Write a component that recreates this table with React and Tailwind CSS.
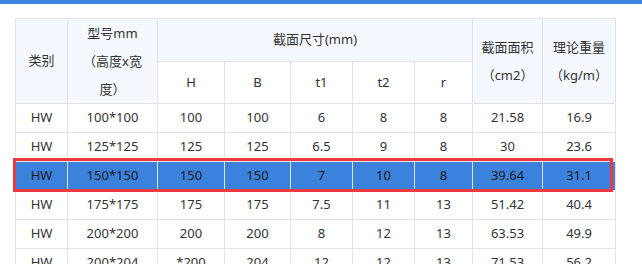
import React from 'react';

// 型钢规格表：HW 宽翼缘 H 型钢
const rows = [
  ['HW', '100*100', '100', '100', '6', '8', '8', '21.58', '16.9'],
  ['HW', '125*125', '125', '125', '6.5', '9', '8', '30', '23.6'],
  ['HW', '150*150', '150', '150', '7', '10', '8', '39.64', '31.1'],
  ['HW', '175*175', '175', '175', '7.5', '11', '13', '51.42', '40.4'],
  ['HW', '200*200', '200', '200', '8', '12', '13', '63.53', '49.9'],
  ['HW', '200*204', '*200', '204', '12', '12', '13', '71.53', '56.2'],
];

const colWidths = ['w-[52px]', 'w-[90px]', 'w-[67px]', 'w-[66px]', 'w-[62px]', 'w-[62px]', 'w-[58px]', 'w-[70px]', 'w-[73px]'];

const ACTIVE = 2;

export default function App() {
  return (
    <div className="w-[642px] h-[264px] overflow-hidden bg-white text-[13px] text-[#333] font-['Noto_Sans','Noto_Sans_CJK_SC',sans-serif]">
      <div className="h-[4px] bg-[#3c84de]" />
      <div className="pl-[15px] pt-[14px]">
        <div className="relative w-[601px]">
          <table className="table-fixed border-collapse w-[601px] text-center">
            <colgroup>
              {colWidths.map((w, i) => (
                <col key={i} className={w} />
              ))}
            </colgroup>
            <thead>
              <tr className="h-[43px] bg-[#f5f9ff]">
                <th rowSpan={2} className="border border-[#e3e3e3] font-normal">类别</th>
                <th rowSpan={2} className="border border-[#e3e3e3] font-normal leading-[28px]">
                  型号mm<br />（高度x宽<br />度）
                </th>
                <th colSpan={5} className="border border-[#e3e3e3] font-normal">截面尺寸(mm)</th>
                <th rowSpan={2} className="border border-[#e3e3e3] font-normal leading-[28px]">
                  截面面积<br />（cm2）
                </th>
                <th rowSpan={2} className="border border-[#e3e3e3] font-normal leading-[28px]">
                  理论重量<br />（kg/m）
                </th>
              </tr>
              <tr className="h-[42px]">
                {['H', 'B', 't1', 't2', 'r'].map((h) => (
                  <th key={h} className="border border-[#e3e3e3] font-normal bg-white">{h}</th>
                ))}
              </tr>
            </thead>
            <tbody>
              {rows.map((r, i) => (
                <tr key={i} className={i === ACTIVE ? 'h-[29px] bg-[#3b82dc] text-[#1a1a1a]' : 'h-[29px] bg-white'}>
                  {r.map((c, j) => (
                    <td key={j} className={i === ACTIVE ? 'border border-[#dfe6ef]' : 'border border-[#e3e3e3]'}>{c}</td>
                  ))}
                </tr>
              ))}
            </tbody>
          </table>
          {/* 选中行红框 */}
          <div className="absolute left-[-2px] top-[140px] w-[600px] h-[34px] border-[3px] border-[#eb3b40] pointer-events-none" />
        </div>
      </div>
    </div>
  );
}
